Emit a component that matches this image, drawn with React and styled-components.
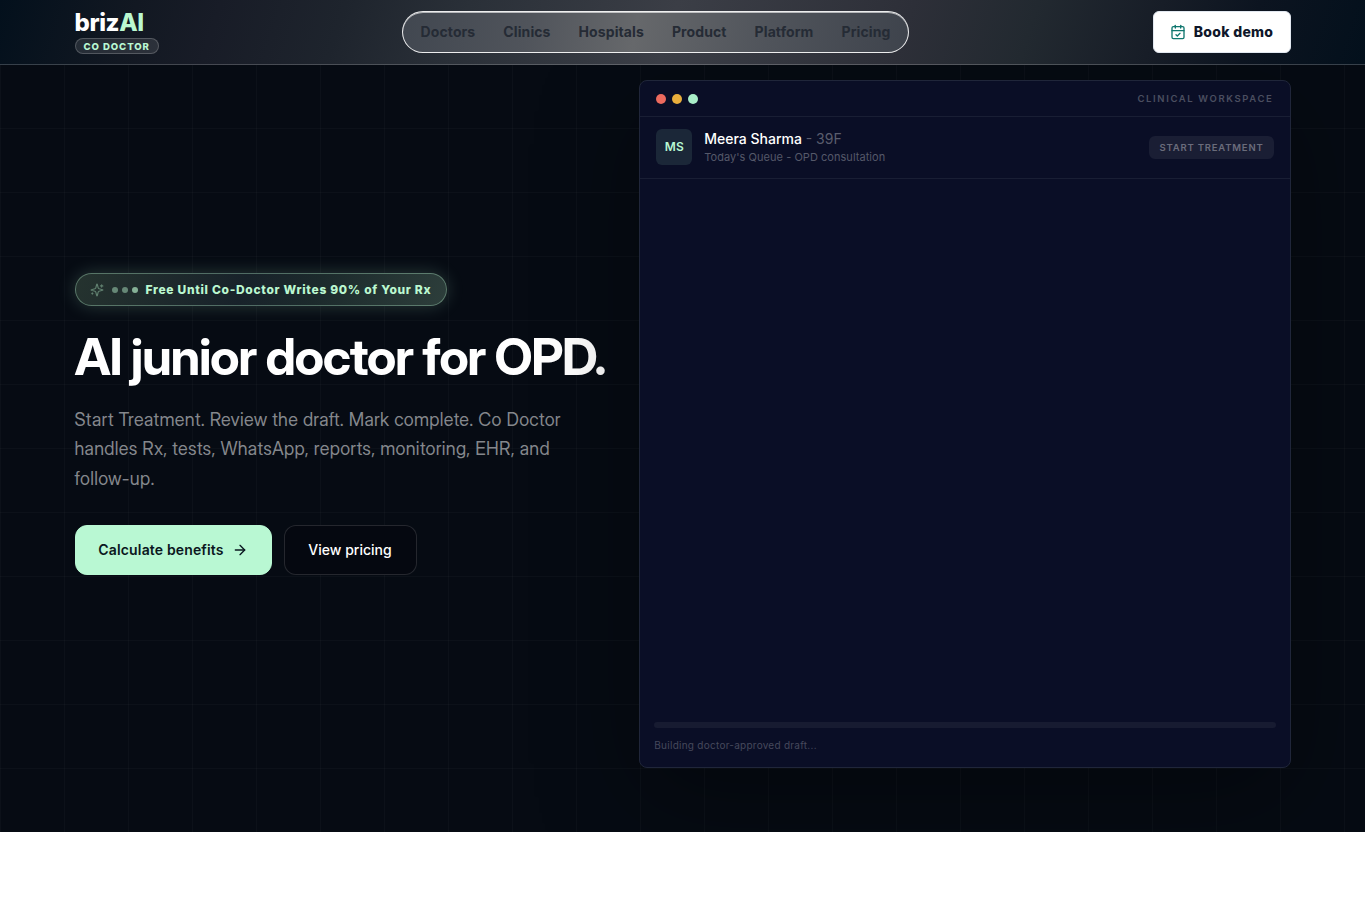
import React from "react";
import styled, { createGlobalStyle } from "styled-components";
import { ArrowRight, CalendarCheck } from "lucide-react";

const GlobalStyle = createGlobalStyle`
  * { box-sizing: border-box; }
  body {
    margin: 0;
    background: #fff;
    font-family: Inter, "Liberation Sans", sans-serif;
    -webkit-font-smoothing: antialiased;
  }
  a { color: inherit; text-decoration: none; }
  button { font-family: inherit; cursor: pointer; }
`;

const Header = styled.header`
  position: sticky;
  top: 0;
  z-index: 10;
  height: 65px;
  margin-bottom: -65px;
  border-bottom: 1px solid rgba(255, 255, 255, 0.2);
  background:
    linear-gradient(108deg, #03101c 0%, #121822 10%, #181c27 16%, #1e242d 25%, #2a3038 34%, #3b3e46 49%, #2d2f38 66%, #222930 75%, #171d27 84%, #0c1420 91%, #03101c 100%);
`;

const Container = styled.div`
  width: 1216px;
  margin: 0 auto;
`;

const HeaderRow = styled(Container)`
  height: 64px;
  display: flex;
  align-items: center;
  justify-content: space-between;
`;

const Logo = styled.a`
  padding-top: 1px;
  display: flex;
  flex-direction: column;
  align-items: flex-start;
  gap: 3px;
`;

const LogoName = styled.span`
  font-size: 24px;
  line-height: 24px;
  font-weight: 800;
  letter-spacing: -0.4px;
  color: #fff;
  span { color: #bbf7d0; }
`;

const LogoTag = styled.span`
  width: 84px;
  height: 16px;
  padding: 0 8px;
  border: 1px solid rgba(255, 255, 255, 0.2);
  border-radius: 8px;
  background: rgba(255, 255, 255, 0.1);
  color: #b9f8d3;
  font-size: 9.6px;
  line-height: 15px;
  font-weight: 800;
  letter-spacing: 0.92px;
  white-space: nowrap;
`;

const Nav = styled.nav`
  height: 42px;
  padding: 0 18px;
  display: flex;
  align-items: center;
  gap: 28px;
  border: 1px solid rgba(255, 255, 255, 0.9);
  border-radius: 21px;
  background: linear-gradient(100deg, #414750 0%, #50545b 25%, #66686b 46%, #50545b 72%, #3e434c 100%);
  box-shadow: inset 0 1px 0 rgba(255, 255, 255, 0.6);
`;

const NavLink = styled.a`
  margin-top: -1px;
  font-size: 14px;
  font-weight: 700;
  letter-spacing: 0.1px;
  color: #252b35;
`;

const DemoButton = styled.button`
  width: 138px;
  height: 42px;
  padding: 0 0 1px;
  display: flex;
  align-items: center;
  justify-content: center;
  gap: 8px;
  border: 1px solid #e2e8f0;
  border-radius: 6px;
  background: #fff;
  color: #0f172a;
  font-size: 14px;
  font-weight: 800;
  letter-spacing: 0.3px;
  svg { color: #0f766e; }
`;

const Hero = styled.section`
  height: 832px;
  padding-top: 80px;
  background:
    linear-gradient(rgba(255, 255, 255, 0.022) 1px, transparent 1px) 0 0 / 64px 64px,
    linear-gradient(90deg, rgba(255, 255, 255, 0.022) 1px, transparent 1px) 0 0 / 64px 64px,
    #060b13;
`;

const HeroGrid = styled(Container)`
  display: grid;
  grid-template-columns: 0.45fr 0.55fr;
  gap: 32px;
  align-items: center;
`;

const Copy = styled.div`
  min-width: 0;
`;

const Badge = styled.div`
  width: 372px;
  height: 33px;
  padding-left: 14px;
  display: flex;
  align-items: center;
  border: 1px solid rgba(187, 247, 208, 0.35);
  border-radius: 17px;
  background: linear-gradient(110deg, #25332f 0%, #18222a 45%, #1c2a2c 65%, #2d3e3b 100%);
  box-shadow: 0 0 18px rgba(187, 247, 208, 0.2);
  color: #bbf7d0;
  font-size: 12px;
  font-weight: 800;
  letter-spacing: 0.68px;
  white-space: nowrap;
`;

const SparkIcon = styled.svg`
  width: 14px;
  height: 14px;
  margin-top: 1px;
  fill: none;
  stroke: currentColor;
  stroke-width: 2;
  stroke-linecap: round;
  stroke-linejoin: round;
  opacity: 0.4;
`;

const BadgeDots = styled.span`
  display: flex;
  gap: 4px;
  margin: 1px 8px 0;
`;

const BadgeDot = styled.i`
  width: 6px;
  height: 6px;
  border-radius: 50%;
  background: #bbf7d0;
  opacity: ${(props) => props.$opacity};
`;

const Title = styled.h1`
  margin: 24px 0 0;
  font-family: "Inter Display", Inter, sans-serif;
  font-size: 51px;
  line-height: 54px;
  font-weight: 700;
  letter-spacing: -1.39px;
  white-space: nowrap;
  color: #fff;
`;

const Lead = styled.p`
  width: 512px;
  margin: 21px 0 0;
  font-family: "Inter Display", Inter, sans-serif;
  font-size: 18px;
  line-height: 29.6px;
  letter-spacing: 0.27px;
  color: #84878c;
`;

const Actions = styled.div`
  display: flex;
  gap: 12px;
  margin-top: 32px;
`;

const Button = styled.button`
  width: ${(props) => props.$width};
  height: 50px;
  padding: 0 0 1px;
  display: flex;
  align-items: center;
  justify-content: center;
  gap: 8px;
  border: 1px solid ${(props) => (props.$primary ? "#b9f8d3" : "rgba(255, 255, 255, 0.13)")};
  border-radius: 12px;
  background: ${(props) => (props.$primary ? "#b9f8d3" : "#050810")};
  color: ${(props) => (props.$primary ? "#0b1720" : "#fff")};
  font-size: 14px;
  font-weight: ${(props) => (props.$primary ? 600 : 500)};
  letter-spacing: ${(props) => (props.$primary ? "0.15px" : "0")};
`;

const Workspace = styled.div`
  height: 688px;
  display: flex;
  flex-direction: column;
  border: 1px solid #20263a;
  border-radius: 8px;
  background: #0a0e26;
  box-shadow: 0 30px 100px rgba(0, 0, 0, 0.35);
`;

const TitleBar = styled.div`
  height: 36px;
  padding: 0 16px;
  display: flex;
  align-items: center;
  justify-content: space-between;
  border-bottom: 1px solid #191e34;
`;

const TitleText = styled.span`
  margin-top: -1px;
  color: #4b4e60;
  font-size: 9.5px;
  font-weight: 600;
  letter-spacing: 1.63px;
`;

const Lights = styled.div`
  display: flex;
  gap: 6px;
`;

const Light = styled.i`
  width: 10px;
  height: 10px;
  border-radius: 50%;
  background: ${(props) => props.$color};
`;

const PatientRow = styled.div`
  height: 62px;
  padding: 12px 16px;
  display: flex;
  align-items: flex-start;
  gap: 12px;
  border-bottom: 1px solid #191e34;
`;

const Avatar = styled.div`
  width: 36px;
  height: 36px;
  padding-bottom: 2px;
  display: grid;
  place-items: center;
  border-radius: 6px;
  background: #1b2738;
  color: #b9f8d3;
  font-size: 12px;
  font-weight: 600;
`;

const Patient = styled.div`
  flex: 1;
`;

const PatientName = styled.div`
  font-size: 14px;
  line-height: 20px;
  font-weight: 500;
  color: #fff;
  span { font-weight: 400; color: #5a5d6d; }
`;

const PatientNote = styled.div`
  font-size: 11px;
  line-height: 16px;
  letter-spacing: 0.04px;
  color: #555869;
`;

const Status = styled.div`
  width: 125px;
  height: 23px;
  margin-top: 7px;
  padding-left: 1px;
  display: grid;
  place-items: center;
  border-radius: 6px;
  background: #1a1e34;
  color: #6a6c7b;
  font-size: 9.5px;
  font-weight: 600;
  letter-spacing: 0.8px;
`;

const Draft = styled.div`
  margin-top: auto;
  padding: 0 14px 14px;
`;

const Progress = styled.div`
  height: 6px;
  border-radius: 3px;
  background: #171b31;
`;

const DraftNote = styled.div`
  margin-top: 10px;
  font-size: 10px;
  line-height: 15px;
  letter-spacing: 0.26px;
  color: #46495c;
`;

const links = ["Doctors", "Clinics", "Hospitals", "Product", "Platform", "Pricing"];

export default function App() {
  return (
    <>
      <GlobalStyle />
      <Header>
        <HeaderRow>
          <Logo href="#">
            <LogoName>briz<span>AI</span></LogoName>
            <LogoTag>CO DOCTOR</LogoTag>
          </Logo>
          <Nav>
            {links.map((link) => (
              <NavLink href="#" key={link}>{link}</NavLink>
            ))}
          </Nav>
          <DemoButton>
            <CalendarCheck size={16} />
            Book demo
          </DemoButton>
        </HeaderRow>
      </Header>
      <Hero>
        <HeroGrid>
          <Copy>
            <Badge>
              <SparkIcon viewBox="0 0 24 24">
                <path d="M9.937 15.5A2 2 0 0 0 8.5 14.063l-6.135-1.582a.5.5 0 0 1 0-.962L8.5 9.936A2 2 0 0 0 9.937 8.5l1.582-6.135a.5.5 0 0 1 .963 0L14.063 8.5A2 2 0 0 0 15.5 9.937l6.135 1.581a.5.5 0 0 1 0 .964L15.5 14.063a2 2 0 0 0-1.437 1.437l-1.582 6.135a.5.5 0 0 1-.963 0z" />
                <path d="M20 3v4M22 5h-4M4 17v2M5 18H3" />
              </SparkIcon>
              <BadgeDots>
                <BadgeDot $opacity={0.45} />
                <BadgeDot $opacity={0.45} />
                <BadgeDot $opacity={0.65} />
              </BadgeDots>
              Free Until Co-Doctor Writes 90% of Your Rx
            </Badge>
            <Title>AI junior doctor for OPD.</Title>
            <Lead>
              Start Treatment. Review the draft. Mark complete. Co Doctor handles Rx, tests,
              WhatsApp, reports, monitoring, EHR, and follow-up.
            </Lead>
            <Actions>
              <Button $primary $width="197px">
                Calculate benefits
                <ArrowRight size={16} />
              </Button>
              <Button $width="133px">View pricing</Button>
            </Actions>
          </Copy>
          <Workspace>
            <TitleBar>
              <Lights>
                <Light $color="#ec6a5e" />
                <Light $color="#e9ae3c" />
                <Light $color="#a9eec8" />
              </Lights>
              <TitleText>CLINICAL WORKSPACE</TitleText>
            </TitleBar>
            <PatientRow>
              <Avatar>MS</Avatar>
              <Patient>
                <PatientName>Meera Sharma <span>- 39F</span></PatientName>
                <PatientNote>Today's Queue - OPD consultation</PatientNote>
              </Patient>
              <Status>START TREATMENT</Status>
            </PatientRow>
            <Draft>
              <Progress />
              <DraftNote>Building doctor-approved draft...</DraftNote>
            </Draft>
          </Workspace>
        </HeroGrid>
      </Hero>
    </>
  );
}
